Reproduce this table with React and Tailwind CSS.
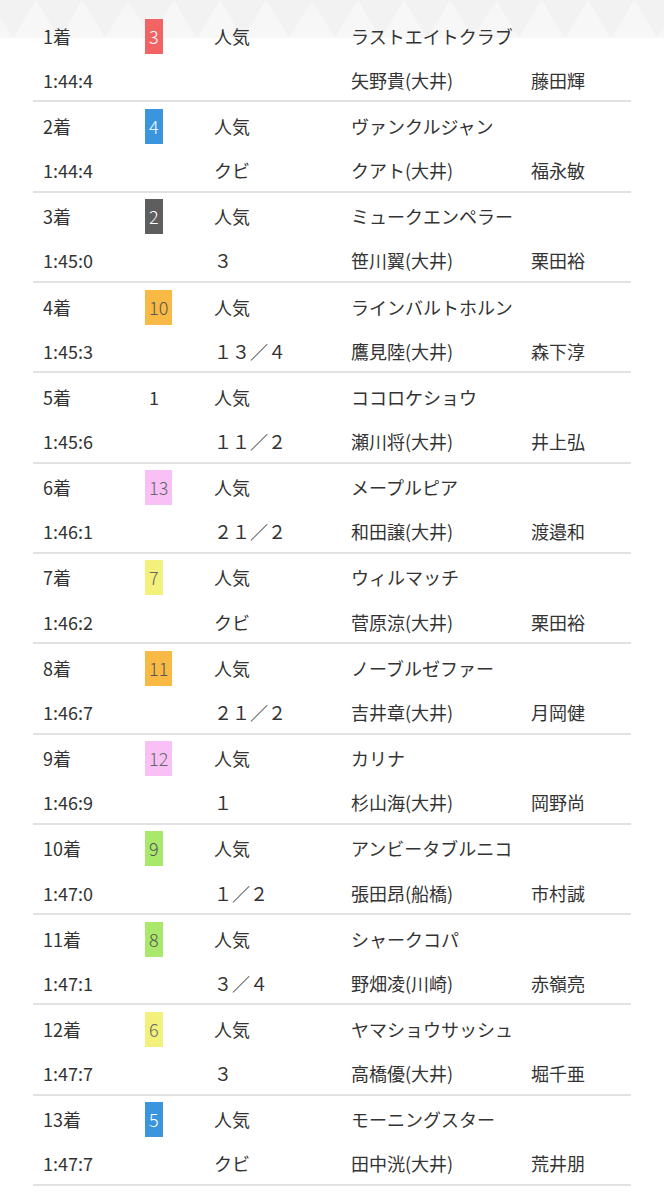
import React from "react";

const rows = [
  ["1着", "3", "ラストエイトクラブ", "1:44:4", "", "矢野貴(大井)", "藤田輝"],
  ["2着", "4", "ヴァンクルジャン", "1:44:4", "クビ", "クアト(大井)", "福永敏"],
  ["3着", "2", "ミュークエンペラー", "1:45:0", "３", "笹川翼(大井)", "栗田裕"],
  ["4着", "10", "ラインバルトホルン", "1:45:3", "１３／４", "鷹見陸(大井)", "森下淳"],
  ["5着", "1", "ココロケショウ", "1:45:6", "１１／２", "瀬川将(大井)", "井上弘"],
  ["6着", "13", "メープルピア", "1:46:1", "２１／２", "和田譲(大井)", "渡邉和"],
  ["7着", "7", "ウィルマッチ", "1:46:2", "クビ", "菅原涼(大井)", "栗田裕"],
  ["8着", "11", "ノーブルゼファー", "1:46:7", "２１／２", "吉井章(大井)", "月岡健"],
  ["9着", "12", "カリナ", "1:46:9", "１", "杉山海(大井)", "岡野尚"],
  ["10着", "9", "アンビータブルニコ", "1:47:0", "１／２", "張田昂(船橋)", "市村誠"],
  ["11着", "8", "シャークコパ", "1:47:1", "３／４", "野畑凌(川崎)", "赤嶺亮"],
  ["12着", "6", "ヤマショウサッシュ", "1:47:7", "３", "高橋優(大井)", "堀千亜"],
  ["13着", "5", "モーニングスター", "1:47:7", "クビ", "田中洸(大井)", "荒井朋"],
];

const badgeClass = {
  "1": "bg-white text-[#333] font-normal",
  "2": "bg-[#5e5e5e] text-white font-light",
  "3": "bg-[#f26464] text-white font-light",
  "4": "bg-[#3a95dd] text-white font-light",
  "5": "bg-[#3a95dd] text-white font-light",
  "6": "bg-[#f3f17c] text-[#666] font-light",
  "7": "bg-[#f3f17c] text-[#666] font-light",
  "8": "bg-[#a9e86b] text-[#555] font-light",
  "9": "bg-[#a9e86b] text-[#555] font-light",
  "10": "bg-[#f8b945] text-[#555] font-light",
  "11": "bg-[#f8b945] text-[#555] font-light",
  "12": "bg-[#f8c0f5] text-[#666] font-light",
  "13": "bg-[#f8c0f5] text-[#666] font-light",
};

function Pattern() {
  const tris = [];
  for (let i = 0; i < 16; i++) {
    const x = i * 46 - 10;
    tris.push(
      <path key={i} d={`M${x} 0 L${x + 23} 38 L${x + 46} 0 Z`} fill="#f2f2f2" />
    );
  }
  return (
    <svg width="664" height="38" viewBox="0 0 664 38" className="block">
      <rect width="664" height="38" fill="#f7f7f7" />
      {tris}
    </svg>
  );
}

export default function App() {
  return (
    <div
      className="w-[664px] min-h-[1200px] bg-white text-[#333] text-[18px]"
      style={{ fontFamily: '"Noto Sans CJK JP", "Noto Sans", sans-serif' }}
    >
      <div className="h-[38px] overflow-hidden">
        <Pattern />
      </div>
      <div className="-mt-[26px] ml-[33px] w-[598px] bg-white">
        {rows.map((r, i) => (
          <div key={i} className="border-b-2 border-[#e2e2e2] pl-[10px]">
            <div className="flex items-center h-[44.17px] pt-[4px]">
              <div className="w-[102px]">{r[0]}</div>
              <div className="w-[69px] flex items-center">
                <span
                  className={`inline-block h-[35px] leading-[35px] px-[4px] ${badgeClass[r[1]]}`}
                >
                  {r[1]}
                </span>
              </div>
              <div className="w-[137px]">人気</div>
              <div className="w-[180px] whitespace-nowrap">{r[2]}</div>
              <div className="flex-1"></div>
            </div>
            <div className="flex items-center h-[44.17px] pt-[4px]">
              <div className="w-[102px]">{r[3]}</div>
              <div className="w-[69px]"></div>
              <div className="w-[137px] whitespace-nowrap">{r[4]}</div>
              <div className="w-[180px] whitespace-nowrap">{r[5]}</div>
              <div className="flex-1 whitespace-nowrap">{r[6]}</div>
            </div>
          </div>
        ))}
      </div>
    </div>
  );
}
